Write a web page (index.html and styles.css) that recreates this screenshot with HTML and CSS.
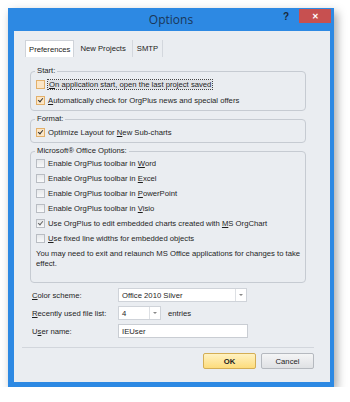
FILE: index.html
```html
<!DOCTYPE html>
<html lang="en">
<head>
    <meta charset="utf-8">
    <title>Options</title>
    <link rel="stylesheet" href="styles.css">
</head>
<body>
<div class="window">
    <div class="titlebar">
        <span></span>
        <span class="title">Options</span>
        <span class="controls">
            <span class="help">?</span>
            <span class="close">✕</span>
        </span>
    </div>
    <div class="client">
        <div class="tabs">
            <span class="tab active">Preferences</span>
            <span class="tab wide">New Projects</span>
            <span class="tab">SMTP</span>
        </div>
        <div class="page">
            <fieldset class="warm">
                <legend>Start:</legend>
                <label class="row"><span class="box"></span><span class="focus"><u>O</u>n application start, open the last project saved</span></label>
                <label class="row"><span class="box on"></span><span><u>A</u>utomatically check for OrgPlus news and special offers</span></label>
            </fieldset>
            <fieldset class="warm">
                <legend>Format:</legend>
                <label class="row"><span class="box on"></span><span>Optimize Layout for <u>N</u>ew Sub-charts</span></label>
            </fieldset>
            <fieldset class="office">
                <legend>Microsoft® Office Options:</legend>
                <label class="row"><span class="box"></span><span>Enable OrgPlus toolbar in <u>W</u>ord</span></label>
                <label class="row"><span class="box"></span><span>Enable OrgPlus toolbar in <u>E</u>xcel</span></label>
                <label class="row"><span class="box"></span><span>Enable OrgPlus toolbar in <u>P</u>owerPoint</span></label>
                <label class="row"><span class="box"></span><span>Enable OrgPlus toolbar in <u>V</u>isio</span></label>
                <label class="row"><span class="box on"></span><span>Use OrgPlus to edit embedded charts created with <u>M</u>S OrgChart</span></label>
                <label class="row"><span class="box"></span><span><u>U</u>se fixed line widths for embedded objects</span></label>
                <p class="note">You may need to exit and relaunch MS Office applications for changes to take effect.</p>
            </fieldset>
            <div class="fields">
                <span><u>C</u>olor scheme:</span>
                <span class="combo wide"><span class="value">Office 2010 Silver</span><span class="drop"></span></span>
                <span><u>R</u>ecently used file list:</span>
                <span class="inline">
                    <span class="combo spin"><span class="value">4</span><span class="drop"></span></span>
                    <span>entries</span>
                </span>
                <span>U<u>s</u>er name:</span>
                <span class="text">IEUser</span>
            </div>
        </div>
        <div class="footer">
            <button class="ok">OK</button>
            <button>Cancel</button>
        </div>
    </div>
</div>
</body>
</html>
```

FILE: styles.css
```css
body { margin: 0; background: #fff; font-family: "Liberation Sans", Arial, sans-serif; font-size: 7.7px; color: #1e1e1e; }
.window { margin: 8px 0 0 8px; width: 326px; height: 379px; box-sizing: border-box; padding: 0 4px 5px 6px; background: #2d89e3; display: flex; flex-direction: column; box-shadow: 3px 4px 9px rgba(0,0,0,0.35); }
.titlebar { height: 23px; display: grid; grid-template-columns: 1fr auto 1fr; align-items: center; margin-left: -6px; margin-right: -4px; }
.title { font-size: 12px; color: #1a3657; font-family: "Open Sans", sans-serif; }
.controls { display: flex; justify-content: flex-end; align-items: flex-start; align-self: stretch; padding: 1px 3px 0 0; }
.help { font-weight: bold; font-size: 10px; color: #1a2a3a; margin: 2px 10px 0 0; }
.close { width: 32px; height: 14px; background: #c75050; color: #fff; font-size: 8px; font-weight: bold; display: flex; align-items: center; justify-content: center; }
.client { flex: 1; background: #eaedf1; display: flex; flex-direction: column; padding-top: 9px; }
.tabs { display: flex; margin-left: 11px; height: 17px; }
.tab { display: flex; align-items: center; padding: 0 4px; border-right: 1px solid #d3d7dd; color: #222; }
.tab.wide { padding: 0 6px; }
.tab.active { background: #fff; border: 1px solid #cfd3d9; border-bottom: none; padding: 0 3px; }
.page { margin: 0 19px 0 11px; padding: 9px 5px 0; }
fieldset { margin: 3px 0 0; padding: 0 4px 2px; border: 1px solid #c6cbd2; border-radius: 4px; }
fieldset:first-child { margin-top: 0; }
legend { padding: 0 2px; height: 10px; line-height: 10px; color: #222; }
.row { display: flex; align-items: center; height: 16px; gap: 3px; }
.office .row { height: 15px; }
.box { width: 9px; height: 9px; box-sizing: border-box; margin-left: 1px; border: 1px solid #b9bdc3; background: linear-gradient(#e6e8ea, #f8f9fa); position: relative; }
.warm .box { border-color: #e3b06a; background: #fce6c6; }
.box.on::after { content: ""; position: absolute; left: 2px; top: 0; width: 2px; height: 4px; border: solid #333; border-width: 0 1.3px 1.3px 0; transform: rotate(40deg); }
.office .box.on::after { border-color: #666; }
.focus { background: #dfe2e7; outline: 1px dotted #444; padding: 0 1px; }
.note { margin: 3px 0 11px 1px; line-height: 10px; }
.fields { display: grid; grid-template-columns: 86px auto; align-items: center; row-gap: 4px; margin: 5px 0 0 2px; justify-items: start; }
.combo { display: flex; height: 14px; box-sizing: border-box; background: #fff; border: 1px solid #cfd3d9; }
.combo.wide { width: 129px; }
.combo.spin { width: 43px; }
.value { flex: 1; padding-left: 3px; display: flex; align-items: center; }
.drop { width: 10px; border-left: 1px solid #dde0e4; display: flex; align-items: center; justify-content: center; }
.drop::before { content: ""; border: 2px solid transparent; border-top: 2.5px solid #888; margin-top: 2px; }
.inline { display: flex; align-items: center; gap: 7px; }
.text { width: 130px; height: 14px; box-sizing: border-box; background: #fff; border: 1px solid #c9cdd3; padding-left: 3px; display: flex; align-items: center; }
.footer { margin: auto 16px 0 8px; border-top: 1px solid #d2d6dc; padding: 5px 0 13px; display: flex; justify-content: flex-end; gap: 5px; }
button { width: 53px; height: 16px; padding: 0; font-family: inherit; font-size: 7.7px; color: #222; border: 1px solid #b5b9bf; border-radius: 2px; background: linear-gradient(#f4f5f6, #dfe1e4); }
button.ok { font-weight: bold; border-color: #d4ae55; background: linear-gradient(#fff2c2, #fddc7c); }
```
